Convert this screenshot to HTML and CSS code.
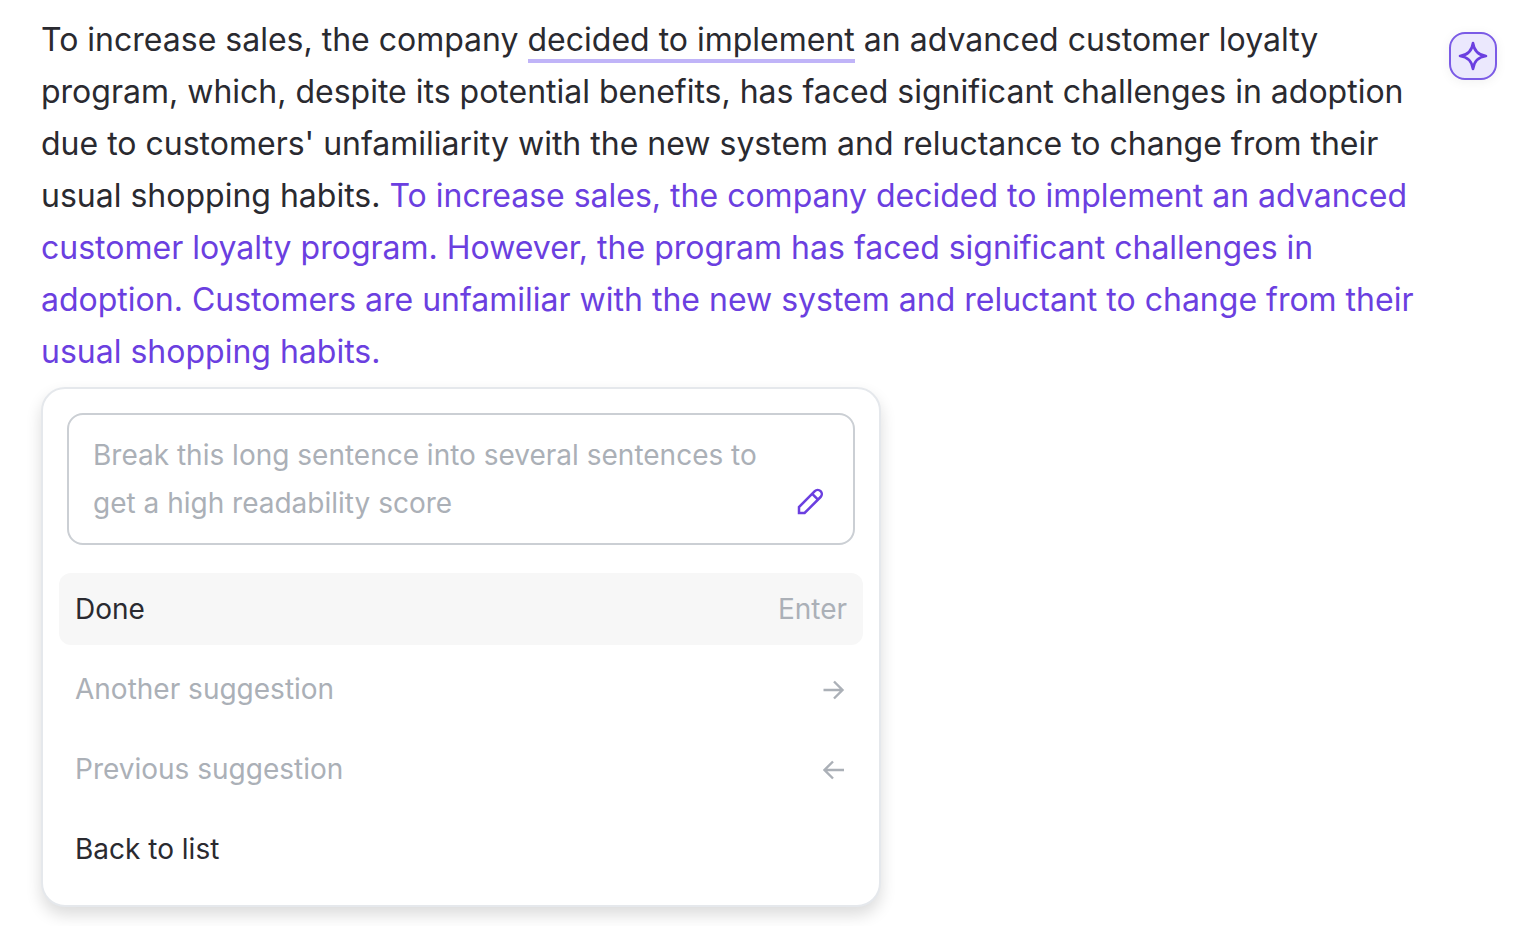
FILE: index.html
```
<!DOCTYPE html>
<html lang="en">
<head>
    <meta charset="UTF-8">
    <meta name="viewport" content="width=device-width, initial-scale=1.0">
    <title>Writing assistant</title>
    <link rel="stylesheet" href="styles.css">
</head>
<body>
    <main class="editor">
        <div class="content">
            <p class="text">To increase sales, the company <span class="highlight">decided to implement</span> an advanced customer loyalty program, which, despite its potential benefits, has faced significant challenges in adoption due to customers' unfamiliarity with the new system and reluctance to change from their usual shopping habits. <span class="suggestion">To increase sales, the company decided to implement an advanced customer loyalty program. However, the program has faced significant challenges in adoption. Customers are unfamiliar with the new system and reluctant to change from their usual shopping habits.</span></p>

            <!-- Assistant popup -->
            <div class="popup">
                <div class="prompt">
                    <textarea class="prompt-input" rows="2" aria-label="Prompt" placeholder="Break this long sentence into several sentences to get a high readability score"></textarea>
                    <button class="edit-button" type="button" aria-label="Edit prompt">
                        <svg width="32" height="32" viewBox="0 0 32 32" fill="none" stroke="currentColor" stroke-width="2.5">
                            <path d="M6 26v-6L21.8 4.2a4.1 4.1 0 0 1 5.8 5.8L11.6 26z"/>
                            <path d="M19.2 6.8l5.8 5.8"/>
                        </svg>
                    </button>
                </div>
                <div class="menu">
                    <button class="menu-item active" type="button">Done <span class="shortcut">Enter</span></button>
                    <button class="menu-item muted" type="button">Another suggestion
                        <svg class="arrow" width="24" height="24" viewBox="0 0 24 24"><path d="M.5 13H20M11 4.500l8.500 8.500-8.500 8.500"/></svg>
                    </button>
                    <button class="menu-item muted" type="button">Previous suggestion
                        <svg class="arrow" width="24" height="24" viewBox="0 0 24 24"><path d="M21 13H1.500M10 4.500L1.500 13l8.500 8.500"/></svg>
                    </button>
                    <button class="menu-item" type="button">Back to list</button>
                </div>
            </div>
        </div>

        <button class="assistant-button" type="button" aria-label="Open assistant">
            <svg width="32" height="32" viewBox="0 0 32 32" fill="none" stroke="currentColor" stroke-width="2.6" stroke-linejoin="round">
                <path d="M16 3C17 11 21 15 29 16C21 17 17 21 16 29C15 21 11 17 3 16C11 15 15 11 16 3z"/>
            </svg>
        </button>
    </main>
</body>
</html>
```
FILE: styles.css
```
* {
    box-sizing: border-box;
}
body {
    margin: 0;
    background-color: #ffffff;
    color: #2a2a30;
    font-family: Inter, sans-serif;
}
button {
    font-family: inherit;
    cursor: pointer;
}
.editor {
    display: flex;
    align-items: flex-start;
    gap: 24px;
    min-height: 100vh;
    padding: 14px 33px 16px 41px;
}
.content {
    flex: 1;
}
.text {
    margin: 0 0 9px;
    font-size: 32px;
    line-height: 52px;
}
.highlight {
    border-bottom: 4px solid #c0b4f8;
}
.suggestion {
    color: #6b3fe0;
}
.popup {
    max-width: 840px;
    padding: 24px 16px 20px;
    border: 2px solid #e5e8ec;
    border-radius: 24px;
    background-color: #ffffff;
    box-shadow: 0 8px 16px rgba(0, 0, 0, 0.14);
}
.prompt {
    display: flex;
    align-items: flex-end;
    margin: 0 8px 28px;
    padding: 16px 24px;
    border: 2px solid #cbcfd4;
    border-radius: 16px;
}
.prompt-input {
    flex: 1;
    height: 96px;
    padding: 0;
    border: none;
    outline: none;
    resize: none;
    overflow: hidden;
    background: none;
    font-family: inherit;
    font-size: 28px;
    line-height: 48px;
}
.prompt-input::placeholder {
    color: #abb0b7;
    opacity: 1;
}
.edit-button {
    display: flex;
    padding: 8px 4px;
    border: none;
    background: none;
    color: #6b3fe0;
}
.menu {
    display: flex;
    flex-direction: column;
    gap: 8px;
}
.menu-item {
    display: flex;
    align-items: center;
    justify-content: space-between;
    height: 72px;
    padding: 0 16px;
    border: none;
    border-radius: 12px;
    background: none;
    color: #2a2a30;
    font-size: 28px;
    text-align: left;
}
.active {
    background-color: #f7f7f7;
}
.muted,
.shortcut {
    color: #abb0b7;
}
.arrow {
    fill: none;
    stroke: currentColor;
    stroke-width: 2.4;
}
.assistant-button {
    display: flex;
    align-items: center;
    justify-content: center;
    width: 48px;
    height: 48px;
    margin-top: 18px;
    padding: 0;
    border: 2px solid #7b5be6;
    border-radius: 16px;
    background-color: #ebe8fd;
    box-shadow: 0 2px 12px rgba(0, 0, 0, 0.06);
    color: #6b3fe0;
}
```
